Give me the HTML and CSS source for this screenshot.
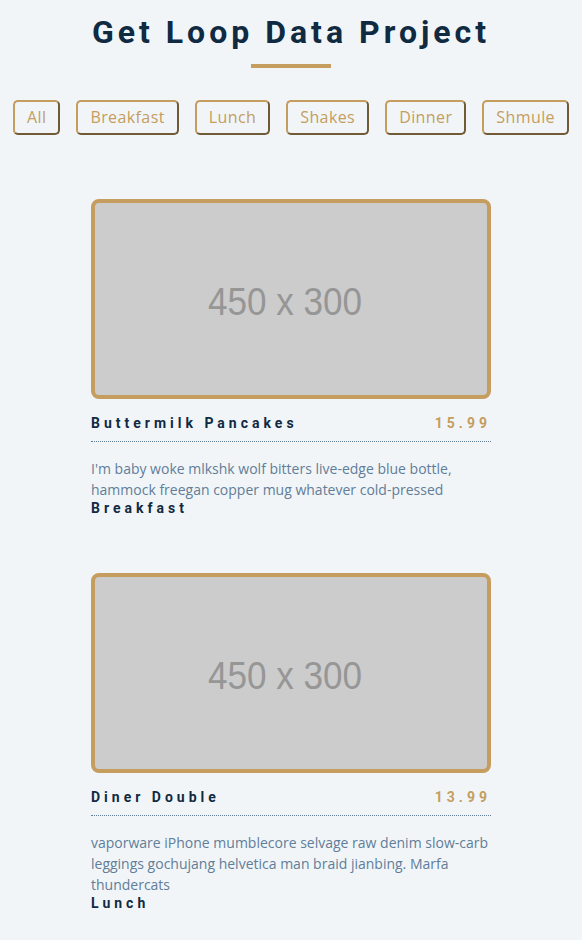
FILE: index.html
```html
<!DOCTYPE html>
<html lang="en">
<head>
    <meta charset="UTF-8">
    <meta name="viewport" content="width=device-width, initial-scale=1.0">
    <title>Get Loop Data Project</title>
    <link rel="stylesheet" href="styles.css">
</head>
<body>
    <section class="menu">
        <!-- Titulo -->
        <div class="title">
            <h2>Get Loop Data Project</h2>
            <div class="underline"></div>
        </div>

        <!-- Filtros -->
        <div class="btn-container">
            <button type="button" class="filter-btn">All</button>
            <button type="button" class="filter-btn">Breakfast</button>
            <button type="button" class="filter-btn">Lunch</button>
            <button type="button" class="filter-btn">Shakes</button>
            <button type="button" class="filter-btn">Dinner</button>
            <button type="button" class="filter-btn">Shmule</button>
        </div>

        <!-- Lista del menu -->
        <div class="section-center">
            <article class="menu-item">
                <div class="photo">
                    <svg viewBox="0 0 392 192" width="392" height="192">
                        <text x="113" y="112" textLength="154" lengthAdjust="spacingAndGlyphs">450 x 300</text>
                    </svg>
                </div>
                <div class="item-info">
                    <header>
                        <h4>Buttermilk Pancakes</h4>
                        <h4 class="price">15.99</h4>
                    </header>
                    <p class="item-text">I'm baby woke mlkshk wolf bitters live-edge blue bottle, hammock freegan copper mug whatever cold-pressed</p>
                    <h4>Breakfast</h4>
                </div>
            </article>

            <article class="menu-item">
                <div class="photo">
                    <svg viewBox="0 0 392 192" width="392" height="192">
                        <text x="113" y="112" textLength="154" lengthAdjust="spacingAndGlyphs">450 x 300</text>
                    </svg>
                </div>
                <div class="item-info">
                    <header>
                        <h4>Diner Double</h4>
                        <h4 class="price">13.99</h4>
                    </header>
                    <p class="item-text">vaporware iPhone mumblecore selvage raw denim slow-carb leggings gochujang helvetica man braid jianbing. Marfa thundercats</p>
                    <h4>Lunch</h4>
                </div>
            </article>
        </div>
    </section>
</body>
</html>
```

FILE: styles.css
```css
/* Variables */
:root {
    --clr-gold: #c59d5f;
    --clr-grey-1: #102a42;
    --clr-grey-5: #617d98;
    --clr-grey-10: #f1f5f8;
    --ff-primary: "Roboto", sans-serif;
    --ff-secondary: "Open Sans", sans-serif;
    --spacing: 0.25rem;
    --radius: 0.25rem;
}

* {
    margin: 0;
    padding: 0;
    box-sizing: border-box;
}

body {
    font-family: var(--ff-secondary);
    background: var(--clr-grey-10);
    color: var(--clr-grey-1);
    line-height: 1.5;
    font-size: 0.875rem;
}

h2,
h4 {
    letter-spacing: var(--spacing);
    line-height: 1.25;
    margin-bottom: 0.75rem;
    font-family: var(--ff-primary);
}

h2 {
    font-size: 2rem;
}

h4 {
    font-size: 0.875rem;
}

p {
    color: var(--clr-grey-5);
}

/* Titulo */
.menu {
    padding-top: 12px;
    padding-bottom: 3rem;
}

.title {
    text-align: center;
    margin-bottom: 2rem;
}

.underline {
    width: 5rem;
    height: 0.25rem;
    background: var(--clr-gold);
    margin: 0 auto;
}

/* Botones */
.btn-container {
    display: flex;
    justify-content: center;
    margin-bottom: 4rem;
}

.filter-btn {
    background: transparent;
    border: 2px outset var(--clr-gold);
    border-radius: 5px;
    font-family: var(--ff-secondary);
    font-size: 1rem;
    line-height: 19px;
    letter-spacing: 0.4px;
    padding: 0.375rem 0.75rem;
    margin: 0 0.5rem;
    color: var(--clr-gold);
    cursor: pointer;
}

/* Lista */
.section-center {
    width: 90vw;
    margin: 0 auto;
    display: grid;
    gap: 3rem 2rem;
    justify-items: center;
}

.menu-item {
    display: grid;
    gap: 1rem;
    max-width: 25rem;
}

.photo {
    width: 400px;
    height: 200px;
    border: 0.25rem solid var(--clr-gold);
    border-radius: 8px;
    background: #cccccc;
    overflow: hidden;
}

.photo svg {
    display: block;
}

.photo text {
    font-family: "Liberation Sans", Arial, sans-serif;
    font-size: 39px;
    fill: #969696;
}

.item-info header {
    display: flex;
    justify-content: space-between;
    border-bottom: 0.5px dotted var(--clr-grey-5);
}

.item-info h4 {
    margin-bottom: 0.5rem;
}

.price {
    color: var(--clr-gold);
}

.item-text {
    padding-top: 1rem;
}
```
